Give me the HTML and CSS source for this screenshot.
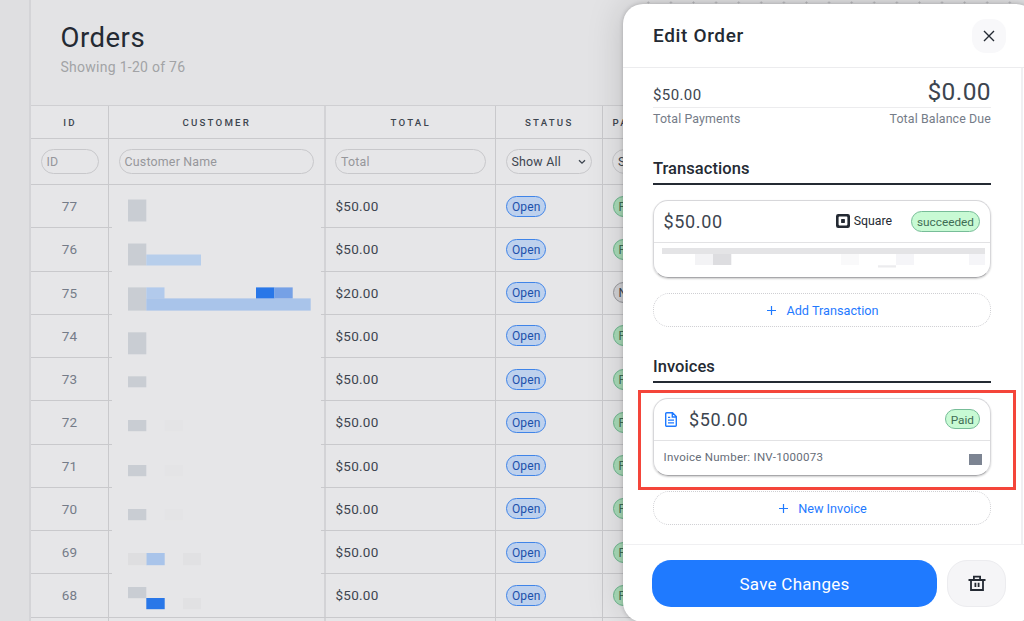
FILE: index.html
```html
<!DOCTYPE html>
<html lang="en">
<head>
  <meta charset="UTF-8">
  <meta name="viewport" content="width=device-width, initial-scale=1.0">
  <title>Orders</title>
  <link rel="stylesheet" href="styles.css">
</head>
<body>
  <main class="orders">
    <header class="orders-header">
      <h1>Orders</h1>
      <p>Showing 1-20 of 76</p>
    </header>

    <div class="table">
      <div class="row head">
        <span>ID</span>
        <span>Customer</span>
        <span>Total</span>
        <span>Status</span>
        <span class="payment">Pa</span>
      </div>
      <div class="row filters">
        <span><span class="field">ID</span></span>
        <span><span class="field">Customer Name</span></span>
        <span><span class="field">Total</span></span>
        <span>
          <span class="field select">Show All
            <svg width="8" height="6" viewBox="0 0 8 6"><path d="M1 1.2l3 3 3-3" fill="none" stroke="currentColor" stroke-width="1.3"/></svg>
          </span>
        </span>
        <span><span class="field select">S</span></span>
      </div>

      <div class="rows">
        <div class="row"><span class="id">77</span><span></span><span>$50.00</span><span><b class="pill open">Open</b></span><span><b class="pill paid">F</b></span></div>
        <div class="row"><span class="id">76</span><span></span><span>$50.00</span><span><b class="pill open">Open</b></span><span><b class="pill paid">F</b></span></div>
        <div class="row"><span class="id">75</span><span></span><span>$20.00</span><span><b class="pill open">Open</b></span><span><b class="pill none">N</b></span></div>
        <div class="row"><span class="id">74</span><span></span><span>$50.00</span><span><b class="pill open">Open</b></span><span><b class="pill paid">F</b></span></div>
        <div class="row"><span class="id">73</span><span></span><span>$50.00</span><span><b class="pill open">Open</b></span><span><b class="pill paid">F</b></span></div>
        <div class="row"><span class="id">72</span><span></span><span>$50.00</span><span><b class="pill open">Open</b></span><span><b class="pill paid">F</b></span></div>
        <div class="row"><span class="id">71</span><span></span><span>$50.00</span><span><b class="pill open">Open</b></span><span><b class="pill paid">F</b></span></div>
        <div class="row"><span class="id">70</span><span></span><span>$50.00</span><span><b class="pill open">Open</b></span><span><b class="pill paid">F</b></span></div>
        <div class="row"><span class="id">69</span><span></span><span>$50.00</span><span><b class="pill open">Open</b></span><span><b class="pill paid">F</b></span></div>
        <div class="row"><span class="id">68</span><span></span><span>$50.00</span><span><b class="pill open">Open</b></span><span><b class="pill paid">F</b></span></div>
        <div class="row last"><span></span><span></span><span></span><span></span><span></span></div>

        <!-- hidden customer names -->
        <svg class="redacted" width="209" height="430" viewBox="112 185 209 430">
          <g fill="#c9cdd3">
            <rect x="128" y="199.5" width="18.3" height="22"/>
            <rect x="128" y="243.5" width="18.3" height="22"/>
            <rect x="128" y="287.4" width="18.3" height="23.2"/>
            <rect x="128" y="332.3" width="18.3" height="22"/>
            <rect x="128" y="376.3" width="18.3" height="11"/>
            <rect x="128" y="420" width="18.3" height="11.2"/>
            <rect x="128" y="465" width="18.3" height="11.2"/>
            <rect x="128" y="509" width="18.3" height="11.2"/>
            <rect x="128" y="587" width="18.3" height="11.2"/>
          </g>
          <g fill="#a9c4ea">
            <rect x="146.3" y="254.5" width="54.7" height="11" fill="#b7ceeb"/>
            <rect x="146.3" y="287.4" width="18.2" height="11.2" fill="#b2caec"/>
            <rect x="146.3" y="298.4" width="164.4" height="12.2"/>
            <rect x="146.3" y="553" width="18.4" height="12.2"/>
          </g>
          <rect x="256" y="287.4" width="18.5" height="11" fill="#2977e8"/>
          <rect x="274.5" y="287.4" width="18.2" height="11" fill="#76a1e6"/>
          <rect x="146.3" y="598" width="18.4" height="11.2" fill="#2977e8"/>
          <g fill="#e4e4e6">
            <rect x="164.7" y="420" width="18.3" height="11.2"/>
            <rect x="164.7" y="465" width="18.3" height="11.2"/>
            <rect x="164.7" y="509" width="18.3" height="11.2"/>
            <rect x="128" y="553" width="18.3" height="12.2" fill="#dedee0"/>
            <rect x="183" y="553" width="18" height="12.2" fill="#e1e1e3"/>
            <rect x="183" y="598" width="18" height="11.2" fill="#e1e1e3"/>
          </g>
        </svg>
      </div>
    </div>
  </main>

  <div class="dots"></div>

  <aside class="drawer">
    <header class="drawer-header">
      <h2>Edit Order</h2>
      <button class="close">
        <svg width="12" height="12" viewBox="0 0 12 12"><path d="M1 1l10 10M11 1L1 11" stroke="currentColor" stroke-width="1.4"/></svg>
      </button>
    </header>

    <div class="drawer-body">
      <div class="amounts">
        <span class="amount">$50.00</span>
        <span class="amount due">$0.00</span>
      </div>
      <div class="captions">
        <span>Total Payments</span>
        <span>Total Balance Due</span>
      </div>

      <h3>Transactions</h3>
      <div class="card">
        <div class="card-top">
          <span class="price">$50.00</span>
          <span class="square">
            <svg width="14" height="14" viewBox="0 0 14 14"><path fill="currentColor" fill-rule="evenodd" d="M2.2 0h9.6A2.2 2.2 0 0 1 14 2.2v9.6a2.2 2.2 0 0 1-2.2 2.2H2.2A2.2 2.2 0 0 1 0 11.8V2.2A2.2 2.2 0 0 1 2.2 0zM3.4 2.6a.8.8 0 0 0-.8.8v7.2c0 .4.4.8.8.8h7.2c.4 0 .8-.4.8-.8V3.4a.8.8 0 0 0-.8-.8zM5.6 5.1h2.8c.3 0 .5.2.5.5v2.8c0 .3-.2.5-.5.5H5.6a.5.5 0 0 1-.5-.5V5.6c0-.3.2-.5.5-.5z"/></svg>
            Square
          </span>
          <b class="pill success">succeeded</b>
        </div>
        <div class="card-bottom">
          <svg class="blocks" width="323" height="20" viewBox="0 0 323 20">
            <rect width="323" height="6" fill="#e4e4e6"/>
            <rect x="33" y="6" width="18" height="11" fill="#f3f3f5"/>
            <rect x="51" y="6" width="18.3" height="11" fill="#dddde0"/>
            <rect x="179" y="6" width="18" height="11" fill="#f9f9fa"/>
            <rect x="216" y="17.3" width="18" height="2.2" fill="#ececee"/>
            <rect x="234" y="6" width="18" height="11" fill="#f5f5f8"/>
            <rect x="307" y="6" width="16" height="11" fill="#f5f5f8"/>
          </svg>
        </div>
      </div>
      <button class="add">
        <svg width="9" height="9" viewBox="0 0 9 9"><path d="M4.5 0v9M0 4.5h9" stroke="currentColor" stroke-width="1.2"/></svg>
        <span>Add Transaction</span>
      </button>

      <h3 class="invoices">Invoices</h3>
      <div class="card invoice">
        <div class="card-top">
          <svg class="doc" width="12" height="15" viewBox="0 0 12 15" fill="none" stroke="currentColor" stroke-width="1.4"><path d="M1.7.8h5.8l3.8 3.8v8.6a1 1 0 0 1-1 1H1.7a1 1 0 0 1-1-1V1.8a1 1 0 0 1 1-1zM7.3 1v4h4M3 5.4h2.2M3 8.1h6M3 10.9h6"/></svg>
          <span class="price">$50.00</span>
          <b class="pill success">Paid</b>
        </div>
        <div class="card-bottom">
          <span class="number">Invoice Number: INV-1000073</span>
          <i class="block"></i>
        </div>
        <div class="highlight"></div>
      </div>
      <button class="add">
        <svg width="9" height="9" viewBox="0 0 9 9"><path d="M4.5 0v9M0 4.5h9" stroke="currentColor" stroke-width="1.2"/></svg>
        <span>New Invoice</span>
      </button>
    </div>

    <footer class="drawer-footer">
      <button class="save">Save Changes</button>
      <button class="delete">
        <svg width="18" height="17" viewBox="0 0 18 17" fill="none" stroke="currentColor" stroke-width="1.8"><path d="M.5 5h17M3 5v10h12V5M5.9 5V1.7h6.2V5M7.4 7.8v4.2M10.6 7.8v4.2"/></svg>
      </button>
    </footer>
  </aside>
</body>
</html>
```
FILE: styles.css
```css
:root {
  --cell: #e6e6e8;
  --line: #c9c9cc;
  --dark: #242a33;
  --text: #3d454f;
  --muted: #757c88;
  --blue: #1f7aff;
}

* {
  box-sizing: border-box;
}

body {
  margin: 0;
  height: 621px;
  overflow: hidden;
  position: relative;
  background: #dfdfe1;
  font-family: Roboto, "Liberation Sans", sans-serif;
  color: var(--text);
}

h1, h2, h3, p {
  margin: 0;
  font-weight: 500;
}

button {
  border: none;
  padding: 0;
  font-family: inherit;
  display: flex;
  align-items: center;
  justify-content: center;
}

.orders {
  margin-left: 29px;
  height: 621px;
  overflow: hidden;
  border-left: 2px solid #d4d4d7;
  background: #e3e3e5;
}

.orders-header {
  height: 105px;
  padding: 20px 0 0 29.5px;
}

h1 {
  font-size: 27.5px;
  line-height: 36px;
  font-weight: 400;
  letter-spacing: 0.5px;
  color: var(--dark);
}

.orders-header p {
  font-size: 14px;
  line-height: 20px;
  margin-top: 1px;
  font-weight: 400;
  letter-spacing: 0.27px;
  color: #a2a3a6;
}

.table {
  background: var(--cell);
  border-top: 1px solid #cfcfd2;
}

.row {
  display: grid;
  grid-template-columns: 78px 216.5px 170.5px 106.5px 160px;
  height: 43.25px;
  border-bottom: 1px solid var(--line);
}

.row.last {
  height: 4px;
  border: none;
}

.row > span {
  display: flex;
  align-items: center;
  padding: 0 10px;
  border-right: 1px solid var(--line);
  font-size: 13.5px;
  letter-spacing: 0.25px;
}

.row > span:nth-child(2) {
  border-right: 2px solid #d3d3d6;
}

.row.head {
  height: 33px;
}

.head > span {
  justify-content: center;
  padding: 0 9px 0 10px;
  font-size: 9.7px;
  font-weight: 500;
  letter-spacing: 2.2px;
  text-transform: uppercase;
}

.head > .payment {
  justify-content: flex-start;
}

.row.filters {
  height: 46px;
}

.row.filters > span {
  padding: 0 9.5px;
}

.field {
  flex: 1;
  height: 25px;
  padding: 0 5px;
  display: flex;
  align-items: center;
  justify-content: space-between;
  border: 1px solid #c8c8cb;
  border-radius: 13px;
  font-size: 12.4px;
  letter-spacing: 0.2px;
  color: #96979b;
}

.select {
  color: var(--text);
}

.row > .id {
  justify-content: center;
  color: var(--muted);
}

.rows {
  position: relative;
}

/* sits over the row lines */
.redacted {
  position: absolute;
  left: 81px;
  top: 0;
  background: var(--cell);
}

.pill {
  min-width: 34px;
  height: 21px;
  padding: 1px 5px 0;
  display: flex;
  align-items: center;
  border: 1px solid;
  border-radius: 11px;
  font-size: 12px;
  font-weight: 400;
  letter-spacing: 0.1px;
}

.open {
  color: #1b50ab;
  background: #bed1ed;
  border-color: #3f84e8;
}

.paid {
  color: #3f6d55;
  background: #aadcb9;
  border-color: #6bb58d;
}

.none {
  background: #d3d3d6;
  border-color: #96979b;
}

.dots {
  position: absolute;
  left: 637px;
  top: 0;
  width: 387px;
  height: 5px;
  background: radial-gradient(circle at 11.3px 2.5px, #bcbcc0 0.8px, transparent 1.3px) 0 0 / 22.6px 5px;
}

.drawer {
  position: absolute;
  left: 623px;
  top: 4px;
  width: 413px;
  height: 618px;
  display: flex;
  flex-direction: column;
  background: #fff;
  border-radius: 20px;
  box-shadow: 0 0 4px rgba(0, 0, 0, 0.2), 0 0 36px rgba(0, 0, 0, 0.17);
}

.drawer-header {
  height: 64px;
  display: flex;
  align-items: center;
  justify-content: space-between;
  padding: 1px 30px 0;
  border-bottom: 1px solid #ececee;
}

h2 {
  font-size: 19px;
  letter-spacing: 0.65px;
  color: var(--dark);
}

.close {
  width: 34px;
  height: 34px;
  border-radius: 14px;
  background: #f8f8fa;
  color: var(--dark);
}

.drawer-body {
  height: 477px;
  width: 400px;
  padding: 0 30px;
  border-right: 2px solid #f0f0f2;
}

.amounts {
  height: 40px;
  display: flex;
  justify-content: space-between;
  align-items: baseline;
  line-height: 48px;
  border-bottom: 1px solid #ececee;
}

.amount {
  font-size: 15px;
  letter-spacing: 0.4px;
}

.due {
  font-size: 24.5px;
  letter-spacing: 0.4px;
}

.captions {
  display: flex;
  justify-content: space-between;
  font-size: 12.4px;
  line-height: 22px;
  letter-spacing: 0.12px;
  color: var(--muted);
}

h3 {
  height: 33px;
  margin-top: 22px;
  border-bottom: 2px solid var(--dark);
  font-size: 16.5px;
  line-height: 33px;
  letter-spacing: 0.05px;
  color: var(--dark);
}

.invoices {
  margin-top: 23px;
}

.card {
  position: relative;
  height: 78px;
  margin-top: 15px;
  border: 1px solid #d7d7da;
  border-bottom-color: #a8a8ab;
  border-radius: 15px;
  box-shadow: 0 1px 2px rgba(0, 0, 0, 0.2);
}

.card-top {
  height: 42px;
  display: flex;
  align-items: center;
  padding: 0 10px 0 9.5px;
  border-bottom: 1px solid #e2e2e4;
}

.price {
  flex: 1;
  font-size: 18px;
  letter-spacing: 0.65px;
}

.square {
  display: flex;
  align-items: center;
  gap: 4px;
  margin-right: 19px;
  font-size: 12.3px;
  color: var(--dark);
}

.success {
  color: #3f6d55;
  background: #c8fad4;
  border-color: #77bd98;
  font-size: 11.8px;
  letter-spacing: 0;
}

.card-bottom {
  display: flex;
  align-items: center;
  justify-content: space-between;
  height: 33px;
  padding: 0 8px 0 9.5px;
}

.blocks {
  flex: none;
  margin: -2px 0 0 -2px;
}

.doc {
  margin: 0 12px 0 1.5px;
  color: var(--blue);
}

.number {
  font-size: 11.5px;
  letter-spacing: 0.25px;
  color: #666d78;
}

.block {
  width: 13px;
  height: 11px;
  margin-top: 4px;
  background: #7c8492;
}

.invoice .pill {
  height: 20px;
}

/* red frame drawn around the invoice card */
.highlight {
  position: absolute;
  left: -16px;
  top: -9px;
  width: 378px;
  height: 100px;
  border: 3px solid #f4453a;
}

.add {
  width: 338px;
  height: 34px;
  padding: 2px 0 0 2px;
  margin-top: 15px;
  gap: 10px;
  background: none;
  border: 1px dotted #cfcfd3;
  border-radius: 16px;
  font-size: 12.7px;
  color: var(--blue);
}

.drawer-footer {
  display: flex;
  gap: 10px;
  padding: 15px 29px;
  border-top: 1px solid #f0f0f2;
}

.save {
  width: 285px;
  height: 47px;
  border-radius: 19px;
  background: var(--blue);
  color: #fff;
  font-size: 17px;
  letter-spacing: 0.25px;
}

.delete {
  width: 59px;
  height: 47px;
  border: 1px solid #ececef;
  border-radius: 20px;
  background: #f5f5f7;
  color: var(--dark);
}
```
